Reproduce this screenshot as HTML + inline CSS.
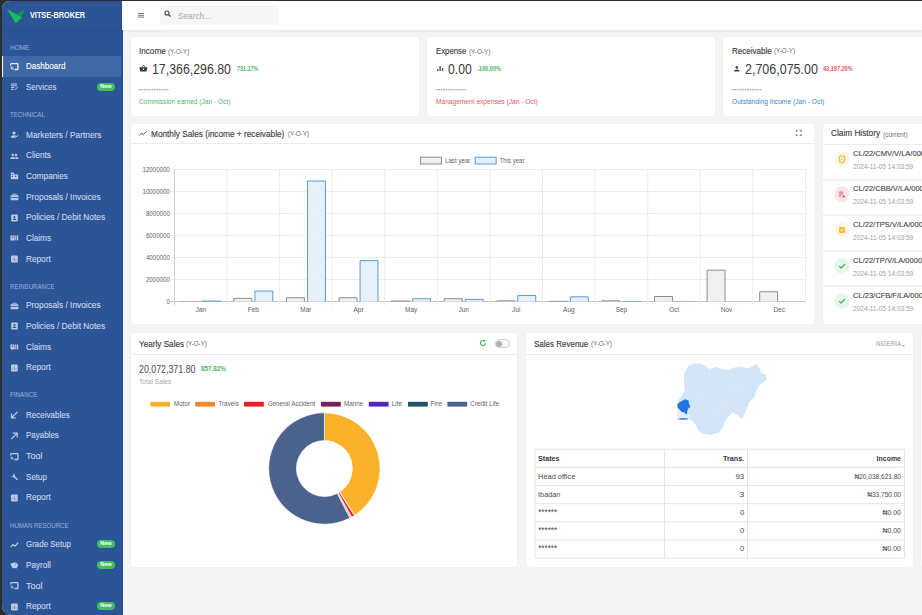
<!DOCTYPE html>
<html><head><meta charset="utf-8">
<style>
*{margin:0;padding:0;box-sizing:border-box}
html,body{width:922px;height:615px;overflow:hidden;background:#2c2c2c;font-family:"Liberation Sans",sans-serif}
#win{position:absolute;left:0;top:0;width:922px;height:615px;background:#f4f4f4;clip-path:inset(1px 0 0 2px round 8px 0 0 9px);overflow:hidden}
.tx{position:absolute;white-space:nowrap;transform-origin:0 0}
.ab{position:absolute}
.ic{position:absolute;opacity:.88}
#side{position:absolute;left:2px;top:1px;width:120px;height:614px;background:#2b5597}
.badge{position:absolute;left:97px;width:17.6px;height:8px;border-radius:4px;background:#41be5d;color:#fff;font-size:5.6px;font-weight:bold;text-align:center;line-height:7.2px;letter-spacing:-0.1px}
.card{position:absolute;background:#fff;border-radius:3px;box-shadow:0 0 1.5px rgba(0,0,0,.07)}
.hl{position:absolute;height:1px;background:#ececec}
svg{overflow:visible}
</style></head><body>
<div id="win">
<div id="side"></div>
<div class="ab" style="left:2px;top:30px;width:120px;height:1px;background:rgba(0,0,0,.05)"></div>
<div class="ab" style="left:122.6px;top:30px;width:1.6px;height:585px;background:linear-gradient(90deg,#fafafa,#f4f4f4)"></div>
<svg class="ab" style="left:0;top:0" width="30" height="30" viewBox="0 0 30 30">
  <polygon points="17.2,13.8 24.7,9.2 21.2,17.6" fill="#0c9c49"/>
  <polygon points="6.8,8.9 22.2,17.4 15.7,23.3" fill="#12c05f"/>
</svg>
<div class="ab" style="left:2px;top:56.2px;width:120px;height:20.5px;background:#4068a7"></div>
<div class="ab" style="left:2px;top:56.2px;width:1.4px;height:20.5px;background:#fff"></div>
<div class="badge" style="top:83.3px">New</div>
<div class="badge" style="top:540.3px">New</div>
<div class="badge" style="top:561px">New</div>
<div class="badge" style="top:601.9px">New</div>
<svg class="ic" style="left:10px;top:62.8px" width="9" height="8" viewBox="0 0 9 8"><path d="M0.7 2.6V1.3Q0.7 0.7 1.3 0.7H7.3Q7.9 0.7 7.9 1.3V5.9Q7.9 6.5 7.3 6.5H4.6" fill="none" stroke="#ffffff" stroke-width="1.3"/><path d="M0.7 3.9A2.6 2.6 0 0 1 3.3 6.5M0.7 5.3A1.2 1.2 0 0 1 1.9 6.5" fill="none" stroke="#ffffff" stroke-width="1"/></svg>
<svg class="ic" style="left:10px;top:83.4px" width="9" height="8" viewBox="0 0 9 8"><rect x="1" y="0.5" width="6" height="1" fill="#d2dbef"/><rect x="1" y="2.3" width="6" height="1" fill="#d2dbef"/><rect x="1" y="4.1" width="3.5" height="1" fill="#d2dbef"/><rect x="1" y="5.9" width="2.5" height="1" fill="#d2dbef"/><path d="M4.5 6.8L7.5 3.8L8 4.3L5 7.3Z" fill="#d2dbef"/></svg>
<svg class="ic" style="left:10px;top:131.1px" width="9" height="8" viewBox="0 0 9 8"><circle cx="4" cy="2" r="1.6" fill="#d2dbef"/><path d="M1 6.2Q1 4.3 4 4.3Q5.5 4.3 6.2 4.8L4.5 6.8H1Z" fill="#d2dbef"/><path d="M4.6 6.8L8.3 4.2" stroke="#d2dbef" stroke-width="1"/></svg>
<svg class="ic" style="left:10px;top:151.7px" width="9" height="8" viewBox="0 0 9 8"><circle cx="2.8" cy="3" r="1.2" fill="#d2dbef"/><circle cx="6" cy="3" r="1.2" fill="#d2dbef"/><path d="M0.3 7Q0.3 5 2.8 5Q5.3 5 5.3 7ZM4 5.2Q4.6 5 6 5Q8.6 5 8.6 7H5.8Q5.8 6 4.8 5.3Z" fill="#d2dbef"/></svg>
<svg class="ic" style="left:10px;top:172.4px" width="9" height="8" viewBox="0 0 9 8"><rect x="0.8" y="0.6" width="3.2" height="6.6" fill="#d2dbef"/><rect x="4" y="2.4" width="4.2" height="4.8" fill="#d2dbef"/><rect x="5" y="3.6" width="1.3" height="1.3" fill="#2b5597"/><rect x="1.8" y="2" width="1.2" height="1" fill="#2b5597"/><rect x="1.8" y="4" width="1.2" height="1" fill="#2b5597"/></svg>
<svg class="ic" style="left:10px;top:193.0px" width="9" height="8" viewBox="0 0 9 8"><path d="M1.2 2.2H7.8Q8.4 2.2 8.4 2.8V6.6Q8.4 7.2 7.8 7.2H1.2Q0.6 7.2 0.6 6.6V2.8Q0.6 2.2 1.2 2.2Z" fill="#d2dbef"/><path d="M2.8 2.2V1.2H6.2V2.2" fill="none" stroke="#d2dbef" stroke-width="0.9"/><rect x="0.6" y="4.2" width="7.8" height="0.8" fill="#2b5597"/></svg>
<svg class="ic" style="left:10px;top:301.7px" width="9" height="8" viewBox="0 0 9 8"><path d="M1.2 2.2H7.8Q8.4 2.2 8.4 2.8V6.6Q8.4 7.2 7.8 7.2H1.2Q0.6 7.2 0.6 6.6V2.8Q0.6 2.2 1.2 2.2Z" fill="#d2dbef"/><path d="M2.8 2.2V1.2H6.2V2.2" fill="none" stroke="#d2dbef" stroke-width="0.9"/><rect x="0.6" y="4.2" width="7.8" height="0.8" fill="#2b5597"/></svg>
<svg class="ic" style="left:10px;top:213.7px" width="9" height="8" viewBox="0 0 9 8"><rect x="1.2" y="0.6" width="6.6" height="6.8" rx="1.2" fill="#d2dbef"/><circle cx="4.5" cy="3" r="1.1" fill="#2b5597"/><path d="M2.6 6Q2.6 4.6 4.5 4.6Q6.4 4.6 6.4 6Z" fill="#2b5597"/></svg>
<svg class="ic" style="left:10px;top:322.4px" width="9" height="8" viewBox="0 0 9 8"><rect x="1.2" y="0.6" width="6.6" height="6.8" rx="1.2" fill="#d2dbef"/><circle cx="4.5" cy="3" r="1.1" fill="#2b5597"/><path d="M2.6 6Q2.6 4.6 4.5 4.6Q6.4 4.6 6.4 6Z" fill="#2b5597"/></svg>
<svg class="ic" style="left:10px;top:234.3px" width="9" height="8" viewBox="0 0 9 8"><rect x="0.4" y="1.4" width="4.2" height="5" rx="0.6" fill="#d2dbef"/><rect x="5.2" y="1.4" width="1.2" height="5" fill="#d2dbef"/><rect x="7" y="1.4" width="1.2" height="5" fill="#d2dbef"/><circle cx="2.5" cy="3.2" r="0.8" fill="#2b5597"/></svg>
<svg class="ic" style="left:10px;top:343.0px" width="9" height="8" viewBox="0 0 9 8"><rect x="0.4" y="1.4" width="4.2" height="5" rx="0.6" fill="#d2dbef"/><rect x="5.2" y="1.4" width="1.2" height="5" fill="#d2dbef"/><rect x="7" y="1.4" width="1.2" height="5" fill="#d2dbef"/><circle cx="2.5" cy="3.2" r="0.8" fill="#2b5597"/></svg>
<svg class="ic" style="left:10px;top:255.0px" width="9" height="8" viewBox="0 0 9 8"><rect x="1" y="0.6" width="6.8" height="6.8" rx="1.2" fill="#d2dbef"/><rect x="2.4" y="3.2" width="0.9" height="2.8" fill="#94a9cf"/><rect x="4" y="2" width="0.9" height="4" fill="#94a9cf"/><rect x="5.5" y="4" width="0.9" height="2" fill="#94a9cf"/></svg>
<svg class="ic" style="left:10px;top:363.6px" width="9" height="8" viewBox="0 0 9 8"><rect x="1" y="0.6" width="6.8" height="6.8" rx="1.2" fill="#d2dbef"/><rect x="2.4" y="3.2" width="0.9" height="2.8" fill="#94a9cf"/><rect x="4" y="2" width="0.9" height="4" fill="#94a9cf"/><rect x="5.5" y="4" width="0.9" height="2" fill="#94a9cf"/></svg>
<svg class="ic" style="left:10px;top:493.7px" width="9" height="8" viewBox="0 0 9 8"><rect x="1" y="0.6" width="6.8" height="6.8" rx="1.2" fill="#d2dbef"/><rect x="2.4" y="3.2" width="0.9" height="2.8" fill="#94a9cf"/><rect x="4" y="2" width="0.9" height="4" fill="#94a9cf"/><rect x="5.5" y="4" width="0.9" height="2" fill="#94a9cf"/></svg>
<svg class="ic" style="left:10px;top:602.5px" width="9" height="8" viewBox="0 0 9 8"><rect x="1" y="0.6" width="6.8" height="6.8" rx="1.2" fill="#d2dbef"/><rect x="2.4" y="3.2" width="0.9" height="2.8" fill="#94a9cf"/><rect x="4" y="2" width="0.9" height="4" fill="#94a9cf"/><rect x="5.5" y="4" width="0.9" height="2" fill="#94a9cf"/></svg>
<svg class="ic" style="left:10px;top:410.9px" width="9" height="8" viewBox="0 0 9 8"><path d="M7.5 0.8L1.8 6.5M1.5 2.5V6.8H5.8" fill="none" stroke="#d2dbef" stroke-width="1.2"/></svg>
<svg class="ic" style="left:10px;top:431.6px" width="9" height="8" viewBox="0 0 9 8"><path d="M1.2 7.2L7 1.4M2.8 1.2H7.2V5.6" fill="none" stroke="#d2dbef" stroke-width="1.2"/></svg>
<svg class="ic" style="left:10px;top:452.7px" width="9" height="8" viewBox="0 0 9 8"><path d="M0.7 2.6V1.3Q0.7 0.7 1.3 0.7H7.3Q7.9 0.7 7.9 1.3V5.9Q7.9 6.5 7.3 6.5H4.6" fill="none" stroke="#d2dbef" stroke-width="1.3"/><path d="M0.7 3.9A2.6 2.6 0 0 1 3.3 6.5M0.7 5.3A1.2 1.2 0 0 1 1.9 6.5" fill="none" stroke="#d2dbef" stroke-width="1"/></svg>
<svg class="ic" style="left:10px;top:581.9px" width="9" height="8" viewBox="0 0 9 8"><path d="M0.7 2.6V1.3Q0.7 0.7 1.3 0.7H7.3Q7.9 0.7 7.9 1.3V5.9Q7.9 6.5 7.3 6.5H4.6" fill="none" stroke="#d2dbef" stroke-width="1.3"/><path d="M0.7 3.9A2.6 2.6 0 0 1 3.3 6.5M0.7 5.3A1.2 1.2 0 0 1 1.9 6.5" fill="none" stroke="#d2dbef" stroke-width="1"/></svg>
<svg class="ic" style="left:10px;top:473.0px" width="9" height="8" viewBox="0 0 9 8"><path d="M1.2 2.6A2 2 0 0 0 4 4.2L7 7.2L8 6.2L5 3.2A2 2 0 0 0 2.6 0.8L3.8 2L2.4 3.4Z" fill="#d2dbef"/></svg>
<svg class="ic" style="left:10px;top:540.7px" width="9" height="8" viewBox="0 0 9 8"><path d="M0.6 6.2L3 3.6L4.8 5.2L8.2 1.6" fill="none" stroke="#d2dbef" stroke-width="1.1"/></svg>
<svg class="ic" style="left:10px;top:561.4px" width="9" height="8" viewBox="0 0 9 8"><ellipse cx="4.6" cy="4.2" rx="3.4" ry="2.8" fill="#d2dbef"/><circle cx="1.4" cy="3.2" r="1" fill="#d2dbef"/><rect x="2.4" y="5.8" width="1.2" height="1.6" fill="#d2dbef"/><rect x="5.6" y="5.8" width="1.2" height="1.6" fill="#d2dbef"/><circle cx="5.8" cy="3.2" r="0.5" fill="#2b5597"/></svg>

<div class="ab" style="left:121.2px;top:1px;width:1.6px;height:614px;background:#22509a"></div>
<div class="ab" style="left:122px;top:1px;width:800px;height:29px;background:#fff;box-shadow:0 1px 2px rgba(0,0,0,.07)"></div>
<div class="ab" style="left:138px;top:13px;width:6px;height:1.1px;background:#7a7a7a;box-shadow:0 1.8px 0 #7a7a7a,0 3.6px 0 #7a7a7a"></div>
<div class="ab" style="left:159.7px;top:5.7px;width:119.4px;height:19px;background:#f5f6f8;border-radius:3px"></div>
<svg class="ab" style="left:164px;top:10px" width="8" height="8" viewBox="0 0 8 8"><circle cx="3" cy="3" r="2" fill="none" stroke="#444" stroke-width="1.1"/><line x1="4.4" y1="4.4" x2="6.6" y2="6.4" stroke="#444" stroke-width="1.3"/></svg>

<div class="card" style="left:131px;top:37px;width:288px;height:78.6px"></div>
<div class="card" style="left:427px;top:37px;width:288px;height:78.6px"></div>
<div class="card" style="left:723px;top:37px;width:260px;height:78.6px"></div>
<svg class="ab" style="left:0;top:0" width="922" height="100"><line x1="139" y1="89.7" x2="169.5" y2="89.7" stroke="#8093b6" stroke-width="1" stroke-dasharray="1.7 0.8"/></svg>
<svg class="ab" style="left:0;top:0" width="922" height="100"><line x1="435.7" y1="89.7" x2="466.2" y2="89.7" stroke="#8093b6" stroke-width="1" stroke-dasharray="1.7 0.8"/></svg>
<svg class="ab" style="left:0;top:0" width="922" height="100"><line x1="732" y1="89.7" x2="762.2" y2="89.7" stroke="#8093b6" stroke-width="1" stroke-dasharray="1.7 0.8"/></svg>
<!-- kpi icons -->
<svg class="ab" style="left:139px;top:65px" width="9" height="7" viewBox="0 0 9 7"><path d="M0.3 2.2H8.5L7.5 6.6H1.3Z" fill="#3a3a3a"/><path d="M2.5 2.4L4.4 0.4L6.3 2.4" fill="none" stroke="#3a3a3a" stroke-width="0.9"/><circle cx="4.4" cy="4.2" r="0.8" fill="#fff"/></svg>
<svg class="ab" style="left:436.6px;top:66px" width="7" height="5" viewBox="0 0 7 5"><rect x="0" y="3" width="1.4" height="2" fill="#555"/><rect x="2.4" y="0" width="1.4" height="5" fill="#555"/><rect x="4.8" y="2" width="1.4" height="3" fill="#555"/></svg>
<svg class="ab" style="left:733.7px;top:65.6px" width="6" height="6" viewBox="0 0 6 6"><circle cx="2.8" cy="1.4" r="1.3" fill="#444"/><path d="M0 5.4Q0 3.4 2.8 3.4Q5.6 3.4 5.6 5.4Z" fill="#444"/></svg>

<!-- monthly sales card -->
<div class="card" style="left:131px;top:123.6px;width:683px;height:200.6px"></div>
<div class="hl" style="left:131px;top:143px;width:683px"></div>
<svg class="ab" style="left:139px;top:131px" width="8" height="5" viewBox="0 0 8 5"><path d="M0.3 4.6L2.6 2.2L4.2 3.6L7.6 0.4" fill="none" stroke="#555" stroke-width="1"/></svg>
<svg class="ab" style="left:795.6px;top:130px" width="5.6" height="6" viewBox="0 0 5.6 6"><path d="M0.4 1.9V0.4H1.9M3.7 0.4H5.2V1.9M5.2 4.1V5.6H3.7M1.9 5.6H0.4V4.1" fill="none" stroke="#666" stroke-width="0.9"/></svg>
<svg class="ab" style="left:0;top:0" width="922" height="615" viewBox="0 0 922 615" font-family="Liberation Sans">
<rect x="420.6" y="157.2" width="21" height="6.8" fill="#eef0f2" stroke="#8c8c8c" stroke-width="1"/>
<rect x="475.2" y="157.2" width="21" height="6.8" fill="#e5f0fb" stroke="#5a9bd8" stroke-width="1"/>
<text x="445" y="162.5" font-size="7" fill="#666" textLength="25.4" lengthAdjust="spacingAndGlyphs">Last year</text>
<text x="499.7" y="162.5" font-size="7" fill="#666" textLength="24.8" lengthAdjust="spacingAndGlyphs">This year</text>
<line x1="170.5" y1="169.5" x2="805" y2="169.5" stroke="#ededed" stroke-width="1"/>
<line x1="170.5" y1="191.5" x2="805" y2="191.5" stroke="#ededed" stroke-width="1"/>
<line x1="170.5" y1="213.5" x2="805" y2="213.5" stroke="#ededed" stroke-width="1"/>
<line x1="170.5" y1="235.5" x2="805" y2="235.5" stroke="#ededed" stroke-width="1"/>
<line x1="170.5" y1="257.5" x2="805" y2="257.5" stroke="#ededed" stroke-width="1"/>
<line x1="170.5" y1="279.5" x2="805" y2="279.5" stroke="#ededed" stroke-width="1"/>
<line x1="170.5" y1="301.5" x2="805" y2="301.5" stroke="#c4c4c4" stroke-width="1"/>
<line x1="174.50" y1="169.5" x2="174.50" y2="305.5" stroke="#cfcfcf" stroke-width="1"/>
<line x1="227.08" y1="169.5" x2="227.08" y2="305.5" stroke="#ededed" stroke-width="1"/>
<line x1="279.66" y1="169.5" x2="279.66" y2="305.5" stroke="#ededed" stroke-width="1"/>
<line x1="332.24" y1="169.5" x2="332.24" y2="305.5" stroke="#ededed" stroke-width="1"/>
<line x1="384.82" y1="169.5" x2="384.82" y2="305.5" stroke="#ededed" stroke-width="1"/>
<line x1="437.40" y1="169.5" x2="437.40" y2="305.5" stroke="#ededed" stroke-width="1"/>
<line x1="489.98" y1="169.5" x2="489.98" y2="305.5" stroke="#ededed" stroke-width="1"/>
<line x1="542.56" y1="169.5" x2="542.56" y2="305.5" stroke="#ededed" stroke-width="1"/>
<line x1="595.14" y1="169.5" x2="595.14" y2="305.5" stroke="#ededed" stroke-width="1"/>
<line x1="647.72" y1="169.5" x2="647.72" y2="305.5" stroke="#ededed" stroke-width="1"/>
<line x1="700.30" y1="169.5" x2="700.30" y2="305.5" stroke="#ededed" stroke-width="1"/>
<line x1="752.88" y1="169.5" x2="752.88" y2="305.5" stroke="#ededed" stroke-width="1"/>
<line x1="805.46" y1="169.5" x2="805.46" y2="305.5" stroke="#ededed" stroke-width="1"/>
<text x="169.8" y="171.5" text-anchor="end" font-size="6.3" fill="#606060" textLength="27.3" lengthAdjust="spacingAndGlyphs">12000000</text>
<text x="169.8" y="193.5" text-anchor="end" font-size="6.3" fill="#606060" textLength="27.3" lengthAdjust="spacingAndGlyphs">10000000</text>
<text x="169.8" y="215.5" text-anchor="end" font-size="6.3" fill="#606060" textLength="23.9" lengthAdjust="spacingAndGlyphs">8000000</text>
<text x="169.8" y="237.5" text-anchor="end" font-size="6.3" fill="#606060" textLength="23.9" lengthAdjust="spacingAndGlyphs">6000000</text>
<text x="169.8" y="259.5" text-anchor="end" font-size="6.3" fill="#606060" textLength="23.9" lengthAdjust="spacingAndGlyphs">4000000</text>
<text x="169.8" y="281.5" text-anchor="end" font-size="6.3" fill="#606060" textLength="23.9" lengthAdjust="spacingAndGlyphs">2000000</text>
<text x="169.8" y="303.5" text-anchor="end" font-size="6.3" fill="#606060" textLength="3.4" lengthAdjust="spacingAndGlyphs">0</text>
<text x="200.79" y="311.6" text-anchor="middle" font-size="6.5" fill="#606060">Jan</text>
<rect x="180.81" y="301.20" width="18.93" height="0.30" fill="#8c8c8c"/>
<rect x="201.84" y="300.50" width="18.93" height="1.00" fill="#5a9bd8"/>
<text x="253.37" y="311.6" text-anchor="middle" font-size="6.5" fill="#606060">Feb</text>
<path d="M233.89 301.5 V298.40 H251.82 V301.5" fill="#eef0f2" stroke="#8c8c8c" stroke-width="1"/>
<path d="M254.92 301.5 V291.00 H272.85 V301.5" fill="#e5f0fb" stroke="#5a9bd8" stroke-width="1"/>
<text x="305.95" y="311.6" text-anchor="middle" font-size="6.5" fill="#606060">Mar</text>
<path d="M286.47 301.5 V297.70 H304.40 V301.5" fill="#eef0f2" stroke="#8c8c8c" stroke-width="1"/>
<path d="M307.50 301.5 V181.00 H325.43 V301.5" fill="#e5f0fb" stroke="#5a9bd8" stroke-width="1"/>
<text x="358.53" y="311.6" text-anchor="middle" font-size="6.5" fill="#606060">Apr</text>
<path d="M339.05 301.5 V297.70 H356.98 V301.5" fill="#eef0f2" stroke="#8c8c8c" stroke-width="1"/>
<path d="M360.08 301.5 V260.60 H378.01 V301.5" fill="#e5f0fb" stroke="#5a9bd8" stroke-width="1"/>
<text x="411.11" y="311.6" text-anchor="middle" font-size="6.5" fill="#606060">May</text>
<rect x="391.13" y="300.50" width="18.93" height="1.00" fill="#8c8c8c"/>
<path d="M412.66 301.5 V298.70 H430.59 V301.5" fill="#e5f0fb" stroke="#5a9bd8" stroke-width="1"/>
<text x="463.69" y="311.6" text-anchor="middle" font-size="6.5" fill="#606060">Jun</text>
<path d="M444.21 301.5 V298.70 H462.14 V301.5" fill="#eef0f2" stroke="#8c8c8c" stroke-width="1"/>
<path d="M465.24 301.5 V299.40 H483.17 V301.5" fill="#e5f0fb" stroke="#5a9bd8" stroke-width="1"/>
<text x="516.27" y="311.6" text-anchor="middle" font-size="6.5" fill="#606060">Jul</text>
<path d="M496.79 301.5 V300.80 H514.72 V301.5" fill="#eef0f2" stroke="#8c8c8c" stroke-width="1"/>
<path d="M517.82 301.5 V295.50 H535.75 V301.5" fill="#e5f0fb" stroke="#5a9bd8" stroke-width="1"/>
<text x="568.85" y="311.6" text-anchor="middle" font-size="6.5" fill="#606060">Aug</text>
<rect x="548.87" y="300.80" width="18.93" height="0.70" fill="#8c8c8c"/>
<path d="M570.40 301.5 V296.80 H588.33 V301.5" fill="#e5f0fb" stroke="#5a9bd8" stroke-width="1"/>
<text x="621.43" y="311.6" text-anchor="middle" font-size="6.5" fill="#606060">Sep</text>
<path d="M601.95 301.5 V300.80 H619.88 V301.5" fill="#eef0f2" stroke="#8c8c8c" stroke-width="1"/>
<rect x="622.48" y="301.00" width="18.93" height="0.50" fill="#5a9bd8"/>
<text x="674.01" y="311.6" text-anchor="middle" font-size="6.5" fill="#606060">Oct</text>
<path d="M654.53 301.5 V296.50 H672.46 V301.5" fill="#eef0f2" stroke="#8c8c8c" stroke-width="1"/>
<rect x="675.06" y="301.20" width="18.93" height="0.30" fill="#5a9bd8"/>
<text x="726.59" y="311.6" text-anchor="middle" font-size="6.5" fill="#606060">Nov</text>
<path d="M707.11 301.5 V270.20 H725.04 V301.5" fill="#eef0f2" stroke="#8c8c8c" stroke-width="1"/>
<text x="779.17" y="311.6" text-anchor="middle" font-size="6.5" fill="#606060">Dec</text>
<path d="M759.69 301.5 V291.70 H777.62 V301.5" fill="#eef0f2" stroke="#8c8c8c" stroke-width="1"/>
</svg>

<!-- claim history -->
<div class="card" style="left:822.5px;top:123.6px;width:120px;height:200.6px"></div>
<div class="hl" style="left:822.5px;top:143.5px;width:100px"></div>
<div class="ab" style="left:822.5px;top:178.7px;width:100px;height:2px;background:#f1f1f1"></div>
<svg class="ab" style="left:833.6px;top:150.7px" width="16" height="16" viewBox="-8 -8 16 16"><circle r="7.8" fill="#fdf6e4"/><g transform="scale(1.2)"><path d="M-2.2 -2.4L-1.2 -3M2.2 -2.4L1.2 -3" stroke="#f2b93a" stroke-width="0.8"/><path d="M-2.3 -1.8Q0 -3.2 2.3 -1.8V0.8Q2.3 2.6 0 3.2Q-2.3 2.6 -2.3 0.8Z" fill="none" stroke="#f2b93a" stroke-width="0.9"/><path d="M-1 0L-0.2 0.8L1.2 -0.8" fill="none" stroke="#f2b93a" stroke-width="0.7"/></g></svg>
<div class="tx" style="left:853.2px;top:150.18px;font-size:7.7px;line-height:7.7px;color:#3e3e3e;transform:scaleX(0.98);-webkit-text-stroke:0.1px currentColor">CL/22/CMV/V/LA/0001</div>
<div class="tx" style="left:853.2px;top:162.71px;font-size:7.2px;line-height:7.2px;color:#a0a0a0;transform:scaleX(0.91)">2024-11-05 14:03:59</div>
<div class="ab" style="left:822.5px;top:213.7px;width:100px;height:2px;background:#f1f1f1"></div>
<svg class="ab" style="left:833.6px;top:186.0px" width="16" height="16" viewBox="-8 -8 16 16"><circle r="7.8" fill="#fbe6e7"/><g transform="scale(1.2)"><rect x="-2.6" y="-2" width="3.6" height="0.9" fill="#e06472"/><rect x="-2.6" y="-0.4" width="3.6" height="0.9" fill="#e06472"/><rect x="-2.6" y="1.2" width="2" height="0.9" fill="#e06472"/><path d="M0.6 0.6L3 2L0.6 3.4Z" fill="#e06472"/></g></svg>
<div class="tx" style="left:853.2px;top:185.48px;font-size:7.7px;line-height:7.7px;color:#3e3e3e;transform:scaleX(0.98);-webkit-text-stroke:0.1px currentColor">CL/22/CBB/V/LA/0001</div>
<div class="tx" style="left:853.2px;top:198.01px;font-size:7.2px;line-height:7.2px;color:#a0a0a0;transform:scaleX(0.91)">2024-11-05 14:03:59</div>
<div class="ab" style="left:822.5px;top:249.8px;width:100px;height:2px;background:#f1f1f1"></div>
<svg class="ab" style="left:833.6px;top:221.8px" width="16" height="16" viewBox="-8 -8 16 16"><circle r="7.8" fill="#fdf6e4"/><g transform="scale(1.2)"><rect x="-2.6" y="-2.6" width="5.2" height="5.2" rx="0.9" fill="#f2b93a"/><path d="M-1.4 0L-0.3 1L1.5 -1" fill="none" stroke="#fff" stroke-width="0.8"/></g></svg>
<div class="tx" style="left:853.2px;top:221.28px;font-size:7.7px;line-height:7.7px;color:#3e3e3e;transform:scaleX(0.98);-webkit-text-stroke:0.1px currentColor">CL/22/TPS/V/LA/0001</div>
<div class="tx" style="left:853.2px;top:233.81px;font-size:7.2px;line-height:7.2px;color:#a0a0a0;transform:scaleX(0.91)">2024-11-05 14:03:59</div>
<div class="ab" style="left:822.5px;top:285.1px;width:100px;height:2px;background:#f1f1f1"></div>
<svg class="ab" style="left:833.6px;top:257.6px" width="16" height="16" viewBox="-8 -8 16 16"><circle r="7.8" fill="#e8f5eb"/><g transform="scale(1.2)"><path d="M-2.4 0.1L-0.8 1.7L2.6 -1.7" fill="none" stroke="#4cb865" stroke-width="1.1"/></g></svg>
<div class="tx" style="left:853.2px;top:257.08px;font-size:7.7px;line-height:7.7px;color:#3e3e3e;transform:scaleX(0.98);-webkit-text-stroke:0.1px currentColor">CL/22/TP/V/LA/00001</div>
<div class="tx" style="left:853.2px;top:269.61px;font-size:7.2px;line-height:7.2px;color:#a0a0a0;transform:scaleX(0.91)">2024-11-05 14:03:59</div>
<svg class="ab" style="left:833.6px;top:292.5px" width="16" height="16" viewBox="-8 -8 16 16"><circle r="7.8" fill="#e8f5eb"/><g transform="scale(1.2)"><path d="M-2.4 0.1L-0.8 1.7L2.6 -1.7" fill="none" stroke="#4cb865" stroke-width="1.1"/></g></svg>
<div class="tx" style="left:853.2px;top:291.98px;font-size:7.7px;line-height:7.7px;color:#3e3e3e;transform:scaleX(0.98);-webkit-text-stroke:0.1px currentColor">CL/23/CFB/F/LA/0001</div>
<div class="tx" style="left:853.2px;top:304.51px;font-size:7.2px;line-height:7.2px;color:#a0a0a0;transform:scaleX(0.91)">2024-11-05 14:03:59</div>

<!-- yearly sales -->
<div class="card" style="left:130.6px;top:333.4px;width:386.8px;height:233.7px"></div>
<div class="hl" style="left:130.6px;top:353.5px;width:387px"></div>
<svg class="ab" style="left:479px;top:338.9px" width="8" height="8" viewBox="0 0 8 8"><path d="M6.4 4A2.5 2.5 0 1 1 5.4 2" fill="none" stroke="#41b35a" stroke-width="1.1"/><path d="M4.4 0.6L6.6 1.4L5.4 3.3Z" fill="#41b35a"/></svg>
<div class="ab" style="left:494.5px;top:339.2px;width:15.3px;height:8.4px;border-radius:4.2px;background:#f6f7f8;border:0.8px solid #cdd1d6"></div>
<div class="ab" style="left:496.2px;top:340.5px;width:6px;height:6px;border-radius:3px;background:#a9b0bb"></div>
<svg class="ab" style="left:0;top:0" width="922" height="615" viewBox="0 0 922 615" font-family="Liberation Sans">
<rect x="150.3" y="401.8" width="19.8" height="4.8" fill="#fcb12b"/><rect x="195.2" y="401.8" width="19.8" height="4.8" fill="#f7862d"/><rect x="244" y="401.8" width="19.8" height="4.8" fill="#ef1d25"/><rect x="321" y="401.8" width="19.8" height="4.8" fill="#7b1f5e"/><rect x="368.8" y="401.8" width="19.8" height="4.8" fill="#5523c5"/><rect x="408" y="401.8" width="19.8" height="4.8" fill="#1e5568"/><rect x="447.4" y="401.8" width="19.8" height="4.8" fill="#4b628c"/>
<text x="173.7" y="406.3" font-size="7" fill="#666" textLength="16.4" lengthAdjust="spacingAndGlyphs">Motor</text><text x="218.39999999999998" y="406.3" font-size="7" fill="#666" textLength="20.5" lengthAdjust="spacingAndGlyphs">Travels</text><text x="267.7" y="406.3" font-size="7" fill="#666" textLength="47.6" lengthAdjust="spacingAndGlyphs">General Accident</text><text x="343.9" y="406.3" font-size="7" fill="#666" textLength="19.4" lengthAdjust="spacingAndGlyphs">Marine</text><text x="391.7" y="406.3" font-size="7" fill="#666" textLength="10.4" lengthAdjust="spacingAndGlyphs">Life</text><text x="430.4" y="406.3" font-size="7" fill="#666" textLength="11.6" lengthAdjust="spacingAndGlyphs">Fire</text><text x="470.3" y="406.3" font-size="7" fill="#666" textLength="29.0" lengthAdjust="spacingAndGlyphs">Credit Life</text>
<path d="M324.40 412.80 A55.7 55.7 0 0 1 354.57 515.32 L339.57 492.04 A28.0 28.0 0 0 0 324.40 440.50Z" fill="#fcb12b" stroke="#fff" stroke-width="0.6"/>
<path d="M354.57 515.32 A55.7 55.7 0 0 1 354.25 515.53 L339.40 492.14 A28.0 28.0 0 0 0 339.57 492.04Z" fill="#f7862d" stroke="#fff" stroke-width="0.6"/>
<path d="M354.25 515.53 A55.7 55.7 0 0 1 351.66 517.07 L338.10 492.92 A28.0 28.0 0 0 0 339.40 492.14Z" fill="#ef1d25" stroke="#fff" stroke-width="0.6"/>
<path d="M351.66 517.07 A55.7 55.7 0 0 1 351.15 517.36 L337.85 493.06 A28.0 28.0 0 0 0 338.10 492.92Z" fill="#7b1f5e" stroke="#fff" stroke-width="0.6"/>
<path d="M351.15 517.36 A55.7 55.7 0 0 1 350.64 517.63 L337.59 493.20 A28.0 28.0 0 0 0 337.85 493.06Z" fill="#5523c5" stroke="#fff" stroke-width="0.6"/>
<path d="M350.64 517.63 A55.7 55.7 0 0 1 349.77 518.08 L337.16 493.43 A28.0 28.0 0 0 0 337.59 493.20Z" fill="#1e5568" stroke="#fff" stroke-width="0.6"/>
<path d="M349.77 518.08 A55.7 55.7 0 1 1 324.40 412.80 L324.40 440.50 A28.0 28.0 0 1 0 337.16 493.43Z" fill="#4b628c" stroke="#fff" stroke-width="0.6"/>
</svg>

<!-- sales revenue -->
<div class="card" style="left:525.9px;top:333.4px;width:387px;height:233.7px"></div>
<div class="hl" style="left:525.9px;top:353.5px;width:387px"></div>
<svg class="ab" style="left:902px;top:344.5px" width="3" height="2" viewBox="0 0 3 2"><path d="M0 0H3L1.5 1.6Z" fill="#999"/></svg>
<div class="card" style="left:920.5px;top:333.5px;width:40px;height:233px"></div>
<svg class="ab" style="left:0;top:0" width="922" height="615" viewBox="0 0 922 615" font-family="Liberation Sans">
<polygon points="688.2,365.8 692.8,363.9 698.6,363.2 704.5,365.2 709,369.1 715.5,367.1 722,369.1 728.5,370.4 733.7,367.8 740.2,366.5 748,368.4 753.2,365.8 756.5,363.9 759.7,368.4 761,373 766.2,374.9 766.9,379.5 763.6,382.1 759.7,384.7 756.5,390.5 754.5,397 749.3,402.2 746.7,408.7 744.1,415.2 741.5,418.5 737.6,415.2 732.4,412.6 728.5,416.5 724.6,421.7 723.3,426.9 719.4,432.1 711.6,434.7 703.8,434.1 698,430.8 695.4,424.3 692.1,420.4 688.2,419.1 677.2,419.1 677.2,412.6 677.8,400.9 681.7,395.7 685,390.5 683.7,382.7 684.3,373.6" fill="#d3e5f8"/>
<path d="M700 366 L702 380 L695 392 L700 405 M709 369 L712 385 L722 392 L735 390 L745 395 M733 368 L730 382 L740 388 L755 385 M722 392 L720 410 L712 420 L705 434 M700 405 L712 410 L728 405 L745 405 M690 395 L702 398 M695 410 L700 425" fill="none" stroke="#ddebfa" stroke-width="0.5"/>
<polygon points="677.4,407.6 679.8,409.7 681.6,411.8 685.3,412.8 687.1,414.2 690,414.5 691.5,417.5 688.6,419.2 677.4,419.2" fill="#e3eefa"/>
<polygon points="677.2,404.5 679.3,402.4 682.4,400.8 685.3,399 686,399.8 688.6,400.6 688.9,403.4 690.5,407.1 688.6,408.1 687.3,410.7 687.1,413.8 685.5,414.4 685.3,412.8 681.6,411.8 679.8,409.7 677.7,407.6" fill="#1f74e0"/>
<polygon points="677.2,419.3 681.1,418.2 686.6,418.2 688.6,419.3 682.4,419.7" fill="#1f74e0"/>
<line x1="535" y1="449.2" x2="904.4" y2="449.2" stroke="#e3e5e8" stroke-width="1"/>
<line x1="535" y1="467.4" x2="904.4" y2="467.4" stroke="#e3e5e8" stroke-width="1"/>
<line x1="535" y1="485.5" x2="904.4" y2="485.5" stroke="#e3e5e8" stroke-width="1"/>
<line x1="535" y1="503.7" x2="904.4" y2="503.7" stroke="#e3e5e8" stroke-width="1"/>
<line x1="535" y1="521.9" x2="904.4" y2="521.9" stroke="#e3e5e8" stroke-width="1"/>
<line x1="535" y1="540.0" x2="904.4" y2="540.0" stroke="#e3e5e8" stroke-width="1"/>
<line x1="535" y1="558.2" x2="904.4" y2="558.2" stroke="#e3e5e8" stroke-width="1"/>
<line x1="535" y1="449.2" x2="535" y2="558.2" stroke="#e3e5e8" stroke-width="1"/>
<line x1="664.5" y1="449.2" x2="664.5" y2="558.2" stroke="#e3e5e8" stroke-width="1"/>
<line x1="747.5" y1="449.2" x2="747.5" y2="558.2" stroke="#e3e5e8" stroke-width="1"/>
<line x1="904.4" y1="449.2" x2="904.4" y2="558.2" stroke="#e3e5e8" stroke-width="1"/>
<text x="538.1" y="460.6" font-size="7.4" font-weight="bold" fill="#3a3a3a" textLength="21.4" lengthAdjust="spacingAndGlyphs">States</text>
<text x="744.2" y="460.6" font-size="7.4" font-weight="bold" fill="#3a3a3a" text-anchor="end" textLength="21.2" lengthAdjust="spacingAndGlyphs">Trans.</text>
<text x="901" y="460.6" font-size="7.4" font-weight="bold" fill="#3a3a3a" text-anchor="end" textLength="24.4" lengthAdjust="spacingAndGlyphs">Income</text>
<text x="538.1" y="478.8" font-size="7.8" font-weight="normal" fill="#4a4a4a" textLength="37.2" lengthAdjust="spacingAndGlyphs">Head office</text>
<text x="744.2" y="478.8" font-size="7.8" font-weight="normal" fill="#4a4a4a" text-anchor="end" textLength="8.8" lengthAdjust="spacingAndGlyphs">93</text>
<text x="901" y="478.8" font-size="7.8" font-weight="normal" fill="#4a4a4a" text-anchor="end" textLength="46.5" lengthAdjust="spacingAndGlyphs">₦20,038,621.80</text>
<text x="538.1" y="496.9" font-size="7.8" font-weight="normal" fill="#4a4a4a" textLength="22.3" lengthAdjust="spacingAndGlyphs">Ibadan</text>
<text x="744.2" y="496.9" font-size="7.8" font-weight="normal" fill="#4a4a4a" text-anchor="end" textLength="5.0" lengthAdjust="spacingAndGlyphs">3</text>
<text x="901" y="496.9" font-size="7.8" font-weight="normal" fill="#4a4a4a" text-anchor="end" textLength="33.8" lengthAdjust="spacingAndGlyphs">₦33,750.00</text>
<text x="538.2" y="514.7" font-size="8.6" fill="#4a4a4a" textLength="19.0" lengthAdjust="spacingAndGlyphs">******</text>
<text x="744.2" y="515.1" font-size="7.8" font-weight="normal" fill="#4a4a4a" text-anchor="end" textLength="4.3" lengthAdjust="spacingAndGlyphs">0</text>
<text x="901" y="515.1" font-size="7.8" font-weight="normal" fill="#4a4a4a" text-anchor="end" textLength="18.6" lengthAdjust="spacingAndGlyphs">₦0.00</text>
<text x="538.2" y="532.9" font-size="8.6" fill="#4a4a4a" textLength="19.0" lengthAdjust="spacingAndGlyphs">******</text>
<text x="744.2" y="533.3" font-size="7.8" font-weight="normal" fill="#4a4a4a" text-anchor="end" textLength="4.3" lengthAdjust="spacingAndGlyphs">0</text>
<text x="901" y="533.3" font-size="7.8" font-weight="normal" fill="#4a4a4a" text-anchor="end" textLength="18.6" lengthAdjust="spacingAndGlyphs">₦0.00</text>
<text x="538.2" y="551.0" font-size="8.6" fill="#4a4a4a" textLength="19.0" lengthAdjust="spacingAndGlyphs">******</text>
<text x="744.2" y="551.4" font-size="7.8" font-weight="normal" fill="#4a4a4a" text-anchor="end" textLength="4.3" lengthAdjust="spacingAndGlyphs">0</text>
<text x="901" y="551.4" font-size="7.8" font-weight="normal" fill="#4a4a4a" text-anchor="end" textLength="18.6" lengthAdjust="spacingAndGlyphs">₦0.00</text>
</svg>

<div id="m_logo" class="tx" style="left:29.81px;top:9.52px;font-size:9.9px;line-height:9.9px;color:#ffffff;font-weight:bold;transform:scaleX(0.7373);">VITSE-BROKER</div>
<div id="m_s0" class="tx" style="left:9.58px;top:43.67px;font-size:7px;line-height:7px;color:#9cb1d9;font-weight:normal;transform:scaleX(0.9250);">HOME</div>
<div id="m_s1" class="tx" style="left:25.96px;top:61.98px;font-size:9px;line-height:9px;color:#ffffff;font-weight:normal;transform:scaleX(0.8977);-webkit-text-stroke:0.1px currentColor;">Dashboard</div>
<div id="m_s2" class="tx" style="left:25.96px;top:82.58px;font-size:9px;line-height:9px;color:#cfd8ee;font-weight:normal;transform:scaleX(0.8829);-webkit-text-stroke:0.1px currentColor;">Services</div>
<div id="m_s3" class="tx" style="left:9.58px;top:111.07px;font-size:7px;line-height:7px;color:#9cb1d9;font-weight:normal;transform:scaleX(0.8775);">TECHNICAL</div>
<div id="m_s4" class="tx" style="left:25.96px;top:131.00px;font-size:9px;line-height:9px;color:#cfd8ee;font-weight:normal;transform:scaleX(0.9256);-webkit-text-stroke:0.1px currentColor;">Marketers / Partners</div>
<div id="m_s5" class="tx" style="left:25.96px;top:150.88px;font-size:9px;line-height:9px;color:#cfd8ee;font-weight:normal;transform:scaleX(0.9071);-webkit-text-stroke:0.1px currentColor;">Clients</div>
<div id="m_s6" class="tx" style="left:25.96px;top:171.58px;font-size:9px;line-height:9px;color:#cfd8ee;font-weight:normal;transform:scaleX(0.9220);-webkit-text-stroke:0.1px currentColor;">Companies</div>
<div id="m_s7" class="tx" style="left:25.96px;top:192.82px;font-size:9px;line-height:9px;color:#cfd8ee;font-weight:normal;transform:scaleX(0.9272);-webkit-text-stroke:0.1px currentColor;">Proposals / Invoices</div>
<div id="m_s8" class="tx" style="left:25.96px;top:212.88px;font-size:9px;line-height:9px;color:#cfd8ee;font-weight:normal;transform:scaleX(0.9244);-webkit-text-stroke:0.1px currentColor;">Policies / Debit Notes</div>
<div id="m_s9" class="tx" style="left:25.96px;top:234.36px;font-size:9px;line-height:9px;color:#cfd8ee;font-weight:normal;transform:scaleX(0.9107);-webkit-text-stroke:0.1px currentColor;">Claims</div>
<div id="m_s10" class="tx" style="left:25.96px;top:254.82px;font-size:9px;line-height:9px;color:#cfd8ee;font-weight:normal;transform:scaleX(0.9148);-webkit-text-stroke:0.1px currentColor;">Report</div>
<div id="m_s11" class="tx" style="left:9.58px;top:282.77px;font-size:7px;line-height:7px;color:#9cb1d9;font-weight:normal;transform:scaleX(0.8740);">REINSURANCE</div>
<div id="m_s12" class="tx" style="left:25.96px;top:300.88px;font-size:9px;line-height:9px;color:#cfd8ee;font-weight:normal;transform:scaleX(0.9272);-webkit-text-stroke:0.1px currentColor;">Proposals / Invoices</div>
<div id="m_s13" class="tx" style="left:25.96px;top:321.58px;font-size:9px;line-height:9px;color:#cfd8ee;font-weight:normal;transform:scaleX(0.9244);-webkit-text-stroke:0.1px currentColor;">Policies / Debit Notes</div>
<div id="m_s14" class="tx" style="left:25.96px;top:342.82px;font-size:9px;line-height:9px;color:#cfd8ee;font-weight:normal;transform:scaleX(0.9107);-webkit-text-stroke:0.1px currentColor;">Claims</div>
<div id="m_s15" class="tx" style="left:25.96px;top:362.78px;font-size:9px;line-height:9px;color:#cfd8ee;font-weight:normal;transform:scaleX(0.9148);-webkit-text-stroke:0.1px currentColor;">Report</div>
<div id="m_s16" class="tx" style="left:9.58px;top:391.47px;font-size:7px;line-height:7px;color:#9cb1d9;font-weight:normal;transform:scaleX(0.8938);">FINANCE</div>
<div id="m_s17" class="tx" style="left:25.96px;top:410.64px;font-size:9px;line-height:9px;color:#cfd8ee;font-weight:normal;transform:scaleX(0.8918);-webkit-text-stroke:0.1px currentColor;">Receivables</div>
<div id="m_s18" class="tx" style="left:25.96px;top:430.78px;font-size:9px;line-height:9px;color:#cfd8ee;font-weight:normal;transform:scaleX(0.8865);-webkit-text-stroke:0.1px currentColor;">Payables</div>
<div id="m_s19" class="tx" style="left:25.96px;top:451.88px;font-size:9px;line-height:9px;color:#cfd8ee;font-weight:normal;transform:scaleX(1.0000);-webkit-text-stroke:0.1px currentColor;">Tool</div>
<div id="m_s20" class="tx" style="left:25.96px;top:472.82px;font-size:9px;line-height:9px;color:#cfd8ee;font-weight:normal;transform:scaleX(0.8958);-webkit-text-stroke:0.1px currentColor;">Setup</div>
<div id="m_s21" class="tx" style="left:25.96px;top:492.88px;font-size:9px;line-height:9px;color:#cfd8ee;font-weight:normal;transform:scaleX(0.9148);-webkit-text-stroke:0.1px currentColor;">Report</div>
<div id="m_s22" class="tx" style="left:9.58px;top:521.87px;font-size:7px;line-height:7px;color:#9cb1d9;font-weight:normal;transform:scaleX(0.8701);">HUMAN RESOURCE</div>
<div id="m_s23" class="tx" style="left:25.96px;top:539.88px;font-size:9px;line-height:9px;color:#cfd8ee;font-weight:normal;transform:scaleX(0.8824);-webkit-text-stroke:0.1px currentColor;">Grade Setup</div>
<div id="m_s24" class="tx" style="left:25.96px;top:560.58px;font-size:9px;line-height:9px;color:#cfd8ee;font-weight:normal;transform:scaleX(0.9046);-webkit-text-stroke:0.1px currentColor;">Payroll</div>
<div id="m_s25" class="tx" style="left:25.96px;top:581.64px;font-size:9px;line-height:9px;color:#cfd8ee;font-weight:normal;transform:scaleX(1.0000);-webkit-text-stroke:0.1px currentColor;">Tool</div>
<div id="m_s26" class="tx" style="left:25.96px;top:601.68px;font-size:9px;line-height:9px;color:#cfd8ee;font-weight:normal;transform:scaleX(0.9148);-webkit-text-stroke:0.1px currentColor;">Report</div>
<div id="m_search" class="tx" style="left:178.26px;top:11.64px;font-size:9px;line-height:9px;color:#a9a9a9;font-weight:normal;transform:scaleX(0.9179);">Search...</div>
<div id="m_inc_t" class="tx" style="left:138.56px;top:46.82px;font-size:9px;line-height:9px;color:#404040;font-weight:normal;transform:scaleX(0.9045);-webkit-text-stroke:0.15px currentColor;">Income</div>
<div id="m_inc_y" class="tx" style="left:168.41px;top:48.50px;font-size:6.5px;line-height:6.5px;color:#6d6d6d;font-weight:normal;transform:scaleX(0.9770);">(Y-O-Y)</div>
<div id="m_inc_v" class="tx" style="left:151.96px;top:62.15px;font-size:14px;line-height:14px;color:#3b3b3b;font-weight:normal;transform:scaleX(0.8822);">17,366,296.80</div>
<div id="m_inc_p" class="tx" style="left:236.64px;top:65.57px;font-size:6.3px;line-height:6.3px;color:#4cb965;font-weight:bold;transform:scaleX(0.8577);">731.17%</div>
<div id="m_inc_s" class="tx" style="left:139.37px;top:97.81px;font-size:7.2px;line-height:7.2px;color:#4cb965;font-weight:normal;transform:scaleX(0.9150);">Commission earned (Jan - Oct)</div>
<div id="m_exp_t" class="tx" style="left:435.72px;top:46.78px;font-size:9px;line-height:9px;color:#404040;font-weight:normal;transform:scaleX(0.8667);-webkit-text-stroke:0.15px currentColor;">Expense</div>
<div id="m_exp_y" class="tx" style="left:469.31px;top:48.50px;font-size:6.5px;line-height:6.5px;color:#6d6d6d;font-weight:normal;transform:scaleX(0.9770);">(Y-O-Y)</div>
<div id="m_exp_v" class="tx" style="left:448.32px;top:62.35px;font-size:14px;line-height:14px;color:#3b3b3b;font-weight:normal;transform:scaleX(0.8679);">0.00</div>
<div id="m_exp_p" class="tx" style="left:476.82px;top:65.57px;font-size:6.3px;line-height:6.3px;color:#4cb965;font-weight:bold;transform:scaleX(0.8926);">-100.00%</div>
<div id="m_exp_s" class="tx" style="left:435.83px;top:97.71px;font-size:7.2px;line-height:7.2px;color:#e0605c;font-weight:normal;transform:scaleX(0.9190);">Management expenses (Jan - Oct)</div>
<div id="m_rec_t" class="tx" style="left:732.26px;top:46.94px;font-size:9px;line-height:9px;color:#404040;font-weight:normal;transform:scaleX(0.8941);-webkit-text-stroke:0.15px currentColor;">Receivable</div>
<div id="m_rec_y" class="tx" style="left:774.31px;top:47.70px;font-size:6.5px;line-height:6.5px;color:#6d6d6d;font-weight:normal;transform:scaleX(0.9678);">(Y-O-Y)</div>
<div id="m_rec_v" class="tx" style="left:744.96px;top:62.45px;font-size:14px;line-height:14px;color:#3b3b3b;font-weight:normal;transform:scaleX(0.8917);">2,706,075.00</div>
<div id="m_rec_p" class="tx" style="left:822.90px;top:65.57px;font-size:6.3px;line-height:6.3px;color:#e0605c;font-weight:bold;transform:scaleX(0.8811);">43,197.20%</div>
<div id="m_rec_s" class="tx" style="left:731.57px;top:97.51px;font-size:7.2px;line-height:7.2px;color:#3a87d4;font-weight:normal;transform:scaleX(0.9242);">Outstanding income (Jan - Oct)</div>
<div id="m_ms_t" class="tx" style="left:151.04px;top:128.54px;font-size:9.4px;line-height:9.4px;color:#3c3c3c;font-weight:normal;transform:scaleX(0.8811);-webkit-text-stroke:0.15px currentColor;">Monthly Sales (income + receivable)</div>
<div id="m_ms_y" class="tx" style="left:288.49px;top:130.82px;font-size:6.5px;line-height:6.5px;color:#6d6d6d;font-weight:normal;transform:scaleX(0.9711);">(Y-O-Y)</div>
<div id="m_ch_t" class="tx" style="left:831.24px;top:128.20px;font-size:9.4px;line-height:9.4px;color:#3c3c3c;font-weight:normal;transform:scaleX(0.8806);-webkit-text-stroke:0.15px currentColor;">Claim History</div>
<div id="m_ch_y" class="tx" style="left:883.41px;top:131.94px;font-size:6.5px;line-height:6.5px;color:#6d6d6d;font-weight:normal;transform:scaleX(1.0016);">(current)</div>
<div id="m_ys_t" class="tx" style="left:138.74px;top:338.94px;font-size:9.4px;line-height:9.4px;color:#3c3c3c;font-weight:normal;transform:scaleX(0.8704);-webkit-text-stroke:0.15px currentColor;">Yearly Sales</div>
<div id="m_ys_y" class="tx" style="left:186.41px;top:341.38px;font-size:6.5px;line-height:6.5px;color:#6d6d6d;font-weight:normal;transform:scaleX(0.9617);">(Y-O-Y)</div>
<div id="m_ys_v" class="tx" style="left:138.64px;top:363.59px;font-size:11px;line-height:11px;color:#4a4a4a;font-weight:normal;transform:scaleX(0.8028);">20,072,371.80</div>
<div id="m_ys_p" class="tx" style="left:201.41px;top:366.02px;font-size:6.5px;line-height:6.5px;color:#4cb965;font-weight:bold;transform:scaleX(0.9705);">857.82%</div>
<div id="m_ys_s" class="tx" style="left:138.88px;top:378.07px;font-size:7px;line-height:7px;color:#a9a9a9;font-weight:normal;transform:scaleX(0.9441);">Total Sales</div>
<div id="m_sr_t" class="tx" style="left:533.84px;top:338.94px;font-size:9.4px;line-height:9.4px;color:#3c3c3c;font-weight:normal;transform:scaleX(0.8529);-webkit-text-stroke:0.15px currentColor;">Sales Revenue</div>
<div id="m_sr_y" class="tx" style="left:591.31px;top:341.38px;font-size:6.5px;line-height:6.5px;color:#6d6d6d;font-weight:normal;transform:scaleX(0.9617);">(Y-O-Y)</div>
<div id="m_sr_n" class="tx" style="left:875.69px;top:340.90px;font-size:6.5px;line-height:6.5px;color:#9a9a9a;font-weight:normal;transform:scaleX(0.9344);">NIGERIA</div>
</div>
</body></html>
